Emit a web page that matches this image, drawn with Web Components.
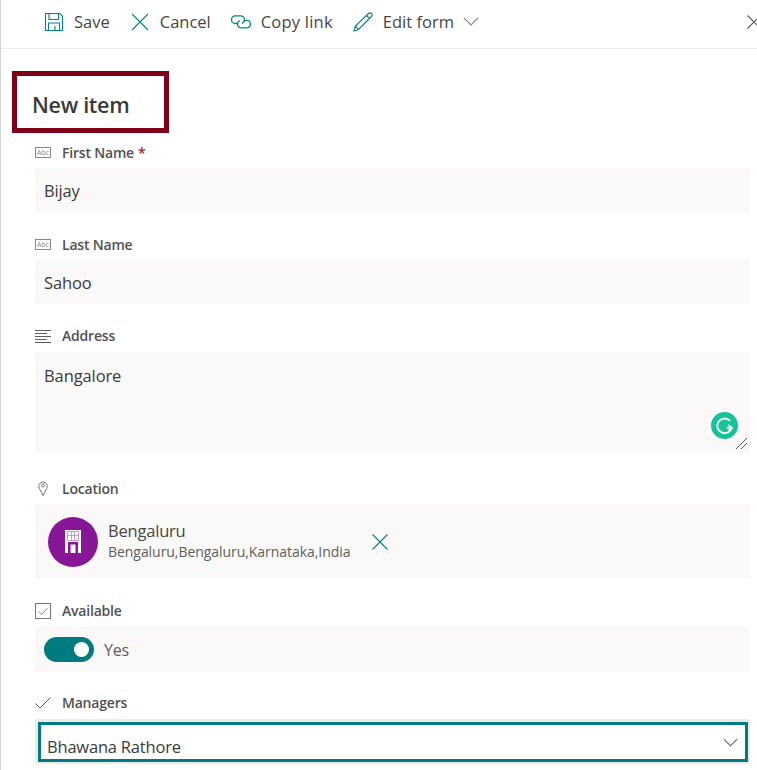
<!DOCTYPE html>
<html><head><meta charset="utf-8">
<style>
html,body{margin:0;padding:0;background:#fff;overflow:hidden;height:770px}
body{font-family:"Open Sans","Noto Sans",sans-serif;color:#323130}
</style></head><body>
<x-panel>
  <x-commandbar slot="bar">
    <x-cmd label="Save"><svg viewBox="0 0 20 20" width="20" height="20" fill="none" stroke="#038387" stroke-width="1.1"><path d="M1.500 1.500h14.300l2.700 2.700v14.300h-17z"/><path d="M5 1.500v6h9.500v-6M4.500 18.500v-7.500h11v7.500M11 14v4.500"/></svg></x-cmd>
    <x-cmd label="Cancel"><svg viewBox="0 0 20 20" width="20" height="20" fill="none" stroke="#038387" stroke-width="1.1"><path d="M2 2l16 16M18 2L2 18"/></svg></x-cmd>
    <x-cmd label="Copy link" style="letter-spacing:.22px"><svg viewBox="0 0 20 20" width="20" height="20" fill="none" stroke="#038387" stroke-width="1.3"><path d="M6.500 11.500H4.300a3.800 3.800 0 0 1 0-7.600h5.400a3.800 3.800 0 0 1 3.800 3.800 3.800 3.800 0 0 1-2.500 3.600"/><path d="M13.500 8.300h2.200a3.800 3.800 0 0 1 0 7.600h-5.400a3.800 3.800 0 0 1-3.800-3.800 3.800 3.800 0 0 1 2.500-3.600"/></svg></x-cmd>
    <x-cmd label="Edit form" caret><svg viewBox="0 0 20 20" width="20" height="20" fill="none" stroke="#038387" stroke-width="1.1"><path d="M1 19l1.400-5L15.500 1.500a1.900 1.900 0 0 1 3 3L5.500 17.500zM2.400 14l3.100 3.500M13.500 3.500l3 3"/></svg></x-cmd>
    <svg slot="close" viewBox="0 0 14 14" width="14" height="14" fill="none" stroke="#605e5c" stroke-width="1.2"><path d="M.5.500l13 13M13.500.500l-13 13"/></svg>
  </x-commandbar>
  <x-title>New item</x-title>
  <x-field label="First Name" required>
    <x-abc-icon slot="icon"></x-abc-icon>
    <x-input>Bijay</x-input>
  </x-field>
  <x-field label="Last Name">
    <x-abc-icon slot="icon"></x-abc-icon>
    <x-input>Sahoo</x-input>
  </x-field>
  <x-field label="Address" style="--lb:5px">
    <svg slot="icon" viewBox="0 0 16 14" width="16" height="14" fill="none" stroke="#605e5c"><path d="M0 1.500h16M0 4.500h12M0 7.500h16M0 10.500h12M0 13.500h16"/></svg>
    <x-textarea>Bangalore</x-textarea>
  </x-field>
  <x-field label="Location" style="margin-top:24px">
    <svg slot="icon" viewBox="0 0 16 16" width="16" height="16" fill="none" stroke="#797775"><path d="M8 15.500L4.300 8.500a4.300 4.300 0 1 1 7.400 0z"/><circle cx="8" cy="5.500" r="1.500"/></svg>
    <x-location name="Bengaluru" address="Bengaluru,Bengaluru,Karnataka,India"></x-location>
  </x-field>
  <x-field label="Available" style="--lb:5px">
    <svg slot="icon" viewBox="0 0 16 16" width="16" height="16" fill="none"><rect x=".5" y=".5" width="15" height="15" stroke="#797775"/><path d="M3.500 8.500l3 3 6-6.500" stroke="#8a8886"/></svg>
    <x-toggle>Yes</x-toggle>
  </x-field>
  <x-field label="Managers" style="--lb:7px">
    <svg slot="icon" viewBox="0 0 16 12" width="16" height="12" fill="none" stroke="#605e5c"><path d="M.5 6.500l4.500 4.500L15.500.5"/></svg>
    <x-select>Bhawana Rathore</x-select>
  </x-field>
</x-panel>
<script>
function def(name, css, html){
  customElements.define(name, class extends HTMLElement{
    connectedCallback(){
      if(this.shadowRoot) return;
      const r=this.attachShadow({mode:'open'});
      const h = typeof html==='function'?html(this):html;
      r.innerHTML='<style>'+css+'</style>'+h;
    }
  });
}
def('x-panel',`:host{display:block;width:757px;height:770px;overflow:hidden;border-left:1px solid #d4d4d4;box-sizing:border-box}`,`<slot name="bar"></slot><slot></slot>`);
def('x-commandbar',`:host{display:flex;align-items:center;border-bottom:1px solid #edebe9;padding:0 0 5px 43px;box-sizing:border-box;height:49px}
.x{margin-left:auto;display:flex;width:10px;overflow:hidden}
::slotted(svg){flex:none}
.c{display:flex;align-items:center}`,`<div class="c"><slot></slot></div><div class="x"><slot name="close"></slot></div>`);
def('x-cmd',`:host{display:inline-flex;align-items:center;margin-right:20px;font-size:16.500px;color:#484644;white-space:nowrap}
.t{margin-left:10px}
.i{display:flex}
.car{margin-left:9px;display:flex}`,el=>`<span class="i"><slot></slot></span><span class="t">${el.getAttribute('label')}</span>${el.hasAttribute('caret')?'<span class="car"><svg viewBox="0 0 16 9" width="16" height="9" fill="none" stroke="#8a8886" stroke-width="1.100"><path d="M1 1l7 7 7-7"/></svg></span>':''}`);
def('x-title',`:host{display:block;box-sizing:border-box;width:157px;height:62px;margin:22px 0 0 11px;border:5px solid #800017;padding:14px 0 0 15px;font-size:21.500px;font-weight:600;letter-spacing:-.3px;line-height:29px;color:#3b3a39}`,`<slot></slot>`);
def('x-abc-icon',`:host{display:flex;align-items:center;justify-content:center;box-sizing:border-box;width:16px;height:11px;border:1px solid #8a8886;font-size:7px;font-weight:400;line-height:9px;letter-spacing:0;color:#8a8886}`,`Abc`);
def('x-field',`:host{display:block;margin:7px 7px 0 34px}
.l{display:flex;align-items:center;box-sizing:border-box;height:28px;padding-bottom:var(--lb,4px);font-size:14px;font-weight:600;letter-spacing:-.2px;color:#53514f}
.ic{width:27px;display:flex;align-items:center;flex:none}
.req{color:#a4262c;margin-left:4px}
.c{display:block;margin-bottom:20px}`,el=>`<div class="l"><span class="ic"><slot name="icon"></slot></span>${el.getAttribute('label')}${el.hasAttribute('required')?'<span class="req">*</span>':''}</div><div class="c"><slot></slot></div>`);
const box=`background:#faf9f8;border-radius:2px;box-sizing:border-box;color:#3b3a39;`;
def('x-input',`:host{display:flex;align-items:center;height:44px;padding:0 9px;${box}font-size:16.500px;letter-spacing:-.15px}`,`<slot></slot>`);
def('x-textarea',`:host{display:block;height:100px;padding:12px 9px;position:relative;${box}font-size:16.500px;letter-spacing:-.1px;line-height:24px}
.g{position:absolute;right:12px;bottom:13px;width:27px;height:27px;border-radius:50%;background:#15c39a;display:flex;align-items:center;justify-content:center}
.r{position:absolute;right:3px;bottom:3px}`,`<slot></slot><span class="g"><svg viewBox="0 0 16 16" width="18" height="18" fill="none" stroke="#fff" stroke-width="1.700"><path d="M12.500 3.500A6.500 6.500 0 1 0 14 9.500H9.500"/><path d="M11 7l3 2.700-3 2.600" stroke-width="1.300"/></svg></span><svg class="r" viewBox="0 0 11 11" width="11" height="11" stroke="#5a5a5a" fill="none"><path d="M0 11L11 0M5 11l6-6"/></svg>`);
def('x-location',`:host{display:flex;align-items:center;height:75px;padding:0 13px;${box}}
.a{width:50px;height:50px;border-radius:50%;background:#881798;display:flex;align-items:center;justify-content:center;flex:none}
.t{margin-left:10px;display:flex;flex-direction:column;margin-top:-2px}
.n{font-size:16.500px;letter-spacing:-.2px;line-height:21px;color:#484644}
.s{font-size:14px;letter-spacing:-.05px;line-height:21px;color:#605e5c;white-space:nowrap}
.x{margin-left:22px;display:flex}`,el=>`<span class="a"><svg viewBox="0 0 16 23" width="16" height="23"><path fill="#fff" d="M0 0h16v23H0z"/><path fill="none" stroke="#c79ccd" d="M2.500 1.500h11v9h-11zM2.500 5.500h11M6.500 1.500v9M9.500 1.500v9"/><path fill="#881798" d="M3 12h10v11h-2.500v-8.500h-5V23H3z"/></svg></span><span class="t"><span class="n">${el.getAttribute('name')}</span><span class="s">${el.getAttribute('address')}</span></span><span class="x"><svg viewBox="0 0 16 16" width="16" height="16" fill="none" stroke="#038387" stroke-width="1.100"><path d="M.5.500l15 15M15.500.500l-15 15"/></svg></span>`);
def('x-toggle',`:host{display:flex;align-items:center;height:45px;padding:0 9px;${box}font-size:16px;letter-spacing:-.25px;color:#605e5c}
.t{width:50px;height:25px;border-radius:13px;background:#007c80;position:relative;margin-right:10px;display:block}
.k{position:absolute;right:5px;top:5px;width:15px;height:15px;border-radius:50%;background:#fff}`,`<span class="t"><span class="k"></span></span><slot></slot>`);
def('x-select',`:host{display:block;height:45px;padding:3px 2px 2px 3px;margin-top:-1px;background:#edebe9;border-radius:2px;box-sizing:border-box}
.i{height:100%;box-sizing:border-box;border:3px solid #007c80;background:#fff;display:flex;align-items:center;justify-content:space-between;padding:9px 7px 0 6px;font-size:16.500px;letter-spacing:-.2px;color:#3b3a39}
svg{margin-top:-8px}`,`<div class="i"><slot></slot><svg viewBox="0 0 16 9" width="15" height="9" fill="none" stroke="#605e5c" stroke-width="1.100"><path d="M1 1l7 7 7-7"/></svg></div>`);
</script>
</body></html>
